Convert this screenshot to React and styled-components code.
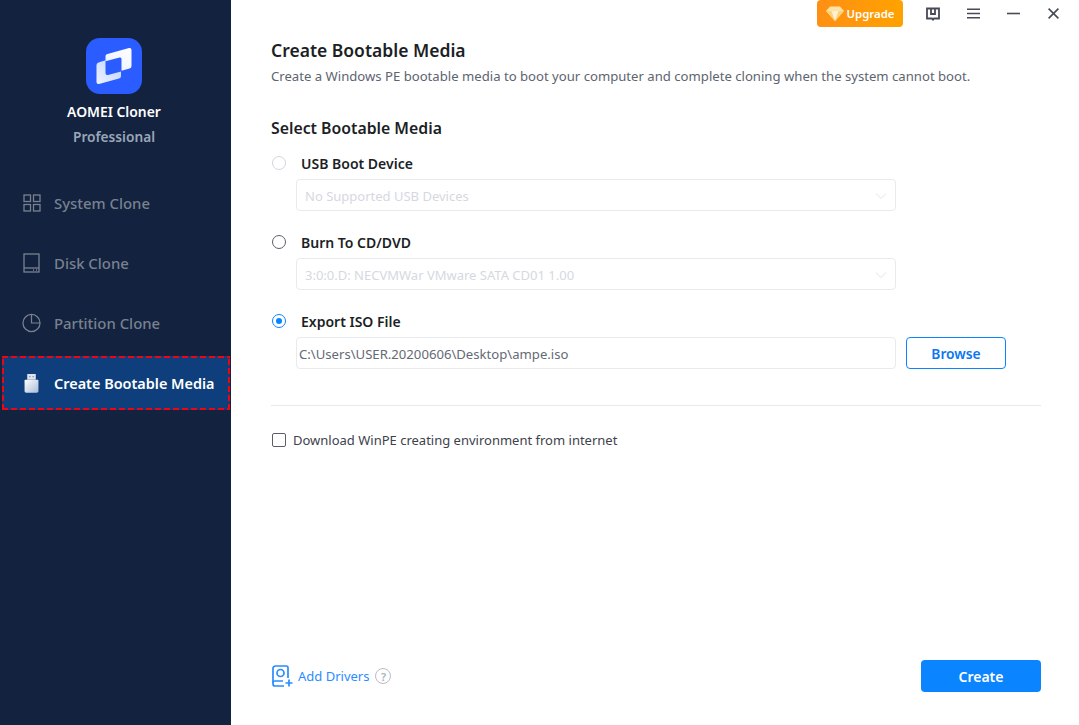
import React from "react";
import styled, { createGlobalStyle } from "styled-components";

const GlobalStyle = createGlobalStyle`
  html, body { margin: 0; padding: 0; background: #fff; }
  body { font-family: "Noto Sans", "Open Sans", sans-serif; }
`;

const Window = styled.div`
  display: flex;
  width: 1079px;
  height: 725px;
  overflow: hidden;
`;

const Sidebar = styled.aside`
  width: 231px;
  flex-shrink: 0;
  background: #13233f;
  display: flex;
  flex-direction: column;
  padding-top: 38px;
  box-sizing: border-box;
`;

const Brand = styled.div`
  display: flex;
  flex-direction: column;
  align-items: center;
  padding-right: 3px;
`;

const LogoTile = styled.div`
  width: 56px;
  height: 56px;
  border-radius: 14px;
  background: #2b5cff;
  display: flex;
`;

const AppName = styled.div`
  margin-top: 8px;
  color: #fff;
  font-size: 13.9px;
  font-weight: 600;
  line-height: 20px;
`;

const Edition = styled.div`
  margin-top: 5px;
  color: #9aa6b8;
  font-size: 13.7px;
  font-weight: 600;
  line-height: 20px;
`;

const Nav = styled.nav`
  margin-top: 26px;
  display: flex;
  flex-direction: column;
`;

const NavItem = styled.div`
  height: 60px;
  box-sizing: border-box;
  display: flex;
  align-items: center;
  gap: 13px;
  padding-left: 22px;
  font-size: 14.9px;
  font-weight: 500;
  color: #79818f;
`;

/* the red dashes are marked on the selected row itself, so the fill stays inside them */
const ActiveNavItem = styled(NavItem)`
  height: 54px;
  margin: 3px 1px 3px 2px;
  padding-left: 20px;
  font-size: 14.45px;
  font-weight: 600;
  color: #fff;
  background:
    repeating-linear-gradient(90deg, #ee0412 0 6px, transparent 6px 9px) top / 100% 2px no-repeat,
    repeating-linear-gradient(90deg, #ee0412 0 6px, transparent 6px 9px) bottom / 100% 2px no-repeat,
    repeating-linear-gradient(0deg, #ee0412 0 6px, transparent 6px 9px) left / 2px 100% no-repeat,
    repeating-linear-gradient(0deg, #ee0412 0 6px, transparent 6px 9px) right / 2px 100% no-repeat,
    #0e3f7c;
`;

const NavIcon = styled.span`
  width: 19px;
  height: 20px;
  display: flex;
  align-items: center;
  justify-content: center;
`;

const Main = styled.main`
  flex: 1;
  display: flex;
  flex-direction: column;
  padding: 0 38px 33px 40px;
  box-sizing: border-box;
  min-width: 0;
`;

const TopBar = styled.div`
  height: 27px;
  margin-right: -38px;
  padding-right: 6px;
  display: flex;
  align-items: flex-start;
  justify-content: flex-end;
`;

const UpgradeButton = styled.div`
  width: 86px;
  height: 27px;
  border-radius: 4px;
  background: linear-gradient(90deg, #ff8f14, #ffa200);
  color: #fff;
  font-size: 11.4px;
  font-weight: 600;
  display: flex;
  align-items: center;
  justify-content: center;
  gap: 3px;
  margin-right: 10px;
`;

const WinButton = styled.div`
  width: 40px;
  height: 27px;
  display: flex;
  align-items: center;
  justify-content: center;
`;

const Title = styled.h1`
  margin: 11px 0 0;
  font-size: 17.5px;
  line-height: 24px;
  font-weight: 600;
  color: #1c1f26;
`;

const Subtitle = styled.p`
  margin: 5px 0 0;
  font-size: 13.13px;
  line-height: 18px;
  color: #5d6470;
`;

const SectionTitle = styled.h2`
  margin: 32px 0 0;
  font-size: 15.8px;
  line-height: 22px;
  font-weight: 600;
  color: #1c1f26;
`;

const OptionRow = styled.div`
  display: flex;
  align-items: center;
  height: 20px;
  margin-top: ${(p) => p.$top}px;
  padding-left: 1px;
`;

const Radio = styled.span`
  width: 14px;
  height: 14px;
  border-radius: 50%;
  box-sizing: border-box;
  border: 1.5px solid ${(p) => p.$color};
  margin-right: 15px;
  display: flex;
  align-items: center;
  justify-content: center;
  &::after {
    content: "";
    display: ${(p) => (p.$checked ? "block" : "none")};
    width: 6px;
    height: 6px;
    border-radius: 50%;
    background: #0a84ff;
  }
`;

const OptionLabel = styled.span`
  font-size: 14px;
  font-weight: 600;
  color: #1c1f26;
`;

const FieldRow = styled.div`
  display: flex;
  gap: 10px;
  margin: 6px 0 0 25px;
`;

const Field = styled.div`
  width: 600px;
  height: 32px;
  box-sizing: border-box;
  border: 1px solid #e8eaed;
  border-radius: 4px;
  display: flex;
  align-items: center;
  justify-content: space-between;
  padding: 2px 8px 0 ${(p) => (p.$filled ? 2 : 8)}px;
  font-size: ${(p) => (p.$filled ? 13.13 : 13)}px;
  color: ${(p) => (p.$filled ? "#646a74" : "#d5d9df")};
`;

const BrowseButton = styled.div`
  width: 100px;
  height: 32px;
  box-sizing: border-box;
  border: 1px solid #0a84ff;
  border-radius: 4px;
  color: #0a78f0;
  font-size: 13.8px;
  font-weight: 600;
  display: flex;
  align-items: center;
  justify-content: center;
`;

const Divider = styled.hr`
  margin: 36px 0 0;
  border: none;
  border-top: 1px solid #e8e9ec;
`;

const CheckRow = styled.div`
  display: flex;
  align-items: center;
  margin-top: 24px;
  padding-left: 1px;
  height: 20px;
  font-size: 13px;
  color: #3d424c;
`;

const CheckBox = styled.span`
  width: 14px;
  height: 14px;
  box-sizing: border-box;
  border: 1.5px solid #5a5f69;
  border-radius: 2px;
  margin-right: 7px;
`;

const Footer = styled.div`
  margin-top: auto;
  display: flex;
  align-items: center;
  justify-content: space-between;
`;

const DriversLink = styled.div`
  display: flex;
  align-items: center;
  gap: 4px;
  color: #2b8cff;
  font-size: 13px;
  padding-left: 1px;
`;

const HelpMark = styled.span`
  width: 16px;
  height: 16px;
  box-sizing: border-box;
  margin-left: 2px;
  border: 1px solid #b8bdc8;
  border-radius: 50%;
  color: #a9afbb;
  font-size: 11px;
  font-weight: 600;
  display: flex;
  align-items: center;
  justify-content: center;
`;

const CreateButton = styled.div`
  width: 120px;
  height: 32px;
  padding-top: 1px;
  box-sizing: border-box;
  border-radius: 4px;
  background: #0a84ff;
  color: #fff;
  font-size: 14px;
  font-weight: 600;
  display: flex;
  align-items: center;
  justify-content: center;
`;

const Chevron = () => (
  <svg width="12" height="8" viewBox="0 0 12 8" fill="none">
    <path d="M1 1.5l5 5 5-5" stroke="#f0f1f3" strokeWidth="1.4" />
  </svg>
);

const Logo = () => (
  <svg width="56" height="56" viewBox="0 0 56 56">
    <defs>
      <linearGradient id="logoTop" x1="1" y1="0" x2="0" y2="1">
        <stop offset="0" stopColor="#ffffff" />
        <stop offset="1" stopColor="#e6eeff" />
      </linearGradient>
      <linearGradient id="logoBottom" x1="1" y1="0" x2="0" y2="1">
        <stop offset="0" stopColor="#bcd0ff" />
        <stop offset="1" stopColor="#eef3ff" />
      </linearGradient>
    </defs>
    <path
      fill="url(#logoTop)"
      d="M21.500 16 43 10Q45.500 9.500 45.500 12V28Q45.500 30 43.500 30.500L35.500 32.800V21Q35.500 19 33.500 19.500L19.500 23.300V18Q19.500 16.500 21.500 16Z"
    />
    <path
      fill="url(#logoBottom)"
      d="M19.500 22.300 12.500 24.500Q10.500 25 10.500 27V44Q10.500 46.500 13 46L33 40.500Q35 40 35 38V33.500L22 37Q19.500 37.600 19.500 35Z"
    />
  </svg>
);

const GridIcon = () => (
  <svg width="18" height="18" viewBox="0 0 18 18" fill="none" stroke="#79818f" strokeWidth="1.3">
    <rect x="1" y="1" width="6.5" height="6.5" />
    <rect x="10.5" y="1" width="6.5" height="6.5" />
    <rect x="1" y="10.5" width="6.5" height="6.5" />
    <rect x="10.5" y="10.5" width="6.5" height="6.5" />
  </svg>
);

const DiskIcon = () => (
  <svg width="17" height="20" viewBox="0 0 17 20" fill="none" stroke="#79818f" strokeWidth="1.3">
    <rect x="1" y="1" width="15" height="18" />
    <path d="M1 15h15" />
    <path d="M10 17h1M13 17h1" />
  </svg>
);

const PieIcon = () => (
  <svg width="20" height="20" viewBox="0 0 20 20" fill="none" stroke="#79818f" strokeWidth="1.3">
    <circle cx="10" cy="10" r="9" />
    <path d="M10 1v9h9" />
  </svg>
);

const UsbIcon = () => (
  <svg width="15" height="19" viewBox="0 0 15 20">
    <defs>
      <linearGradient id="usbFade" x1="0" y1="0" x2="1" y2="1">
        <stop offset="0" stopColor="#ffffff" />
        <stop offset="1" stopColor="#a9bcd8" />
      </linearGradient>
    </defs>
    <path d="M3 0h9v6H3z" fill="#dfe5ee" />
    <path d="M5 2h1.500v1.500H5zM8.500 2H10v1.500H8.500z" fill="#8a99b0" />
    <path d="M1 6h13c.5 0 .8.300.8.800V18c0 1-.7 1.800-1.800 1.800H2C.9 19.800.2 19 .2 18V6.800C.2 6.300.5 6 1 6Z" fill="url(#usbFade)" />
  </svg>
);

const Gem = () => (
  <svg width="18" height="15" viewBox="0 0 18 15">
    <path d="M4 .5h10L18 5 9 15 0 5z" fill="#ffe2a6" />
    <path d="M0 5h18L9 15z" fill="#ffd27a" />
    <path d="M5.500 5h7L9 15z" fill="#fff1d2" />
  </svg>
);

const BookIcon = () => (
  <svg width="14" height="14" viewBox="0 0 14 14" fill="none" stroke="#474b58" strokeWidth="1.8">
    <path d="M1 1.500h12v10H8L7 12.700 6 11.500H1z" />
    <path d="M5 1.500v5.500h4V1.500" />
  </svg>
);

const MenuIcon = () => (
  <svg width="13" height="11" viewBox="0 0 13 11" fill="none" stroke="#474b58" strokeWidth="1.600">
    <path d="M0 1.200h13M0 5.500h13M0 9.800h13" />
  </svg>
);

const MinIcon = () => (
  <svg width="13" height="3" viewBox="0 0 13 3" fill="none" stroke="#474b58" strokeWidth="1.600">
    <path d="M0 1.500h13" />
  </svg>
);

const CloseIcon = () => (
  <svg width="11" height="11" viewBox="0 0 11 11" fill="none" stroke="#474b58" strokeWidth="1.600">
    <path d="M.6.600l9.800 9.800M10.400.600.600 10.400" />
  </svg>
);

const DriverIcon = () => (
  <svg width="22" height="22" viewBox="0 0 22 22" fill="none" stroke="#2b8cff" strokeWidth="1.700">
    <path d="M16 13V2.500C16 1.700 15.300 1 14.500 1H3.500C2.200 1 1 2 1 3.500V19c0 1 .8 2 2 2h9" />
    <circle cx="8.500" cy="8" r="3.500" />
    <path d="M1 17.500c0-1 .8-1.500 2-1.500h8" />
    <path d="M17 14.500v7M13.500 18h7" />
  </svg>
);

const App = () => (
  <Window>
    <GlobalStyle />
    <Sidebar>
      <Brand>
        <LogoTile>
          <Logo />
        </LogoTile>
        <AppName>AOMEI Cloner</AppName>
        <Edition>Professional</Edition>
      </Brand>
      <Nav>
        <NavItem>
          <NavIcon><GridIcon /></NavIcon>
          System Clone
        </NavItem>
        <NavItem>
          <NavIcon><DiskIcon /></NavIcon>
          Disk Clone
        </NavItem>
        <NavItem>
          <NavIcon><PieIcon /></NavIcon>
          Partition Clone
        </NavItem>
        <ActiveNavItem>
          <NavIcon><UsbIcon /></NavIcon>
          Create Bootable Media
        </ActiveNavItem>
      </Nav>
    </Sidebar>
    <Main>
      <TopBar>
        <UpgradeButton><Gem />Upgrade</UpgradeButton>
        <WinButton><BookIcon /></WinButton>
        <WinButton><MenuIcon /></WinButton>
        <WinButton><MinIcon /></WinButton>
        <WinButton><CloseIcon /></WinButton>
      </TopBar>
      <Title>Create Bootable Media</Title>
      <Subtitle>Create a Windows PE bootable media to boot your computer and complete cloning when the system cannot boot.</Subtitle>
      <SectionTitle>Select Bootable Media</SectionTitle>

      <OptionRow $top={14}>
        <Radio $color="#d3d6dc" />
        <OptionLabel>USB Boot Device</OptionLabel>
      </OptionRow>
      <FieldRow>
        <Field>No Supported USB Devices<Chevron /></Field>
      </FieldRow>

      <OptionRow $top={21}>
        <Radio $color="#5a5f69" />
        <OptionLabel>Burn To CD/DVD</OptionLabel>
      </OptionRow>
      <FieldRow>
        <Field>3:0:0.D: NECVMWar VMware SATA CD01 1.00<Chevron /></Field>
      </FieldRow>

      <OptionRow $top={21}>
        <Radio $color="#0a84ff" $checked />
        <OptionLabel>Export ISO File</OptionLabel>
      </OptionRow>
      <FieldRow>
        <Field $filled>C:\Users\USER.20200606\Desktop\ampe.iso</Field>
        <BrowseButton>Browse</BrowseButton>
      </FieldRow>

      <Divider />
      <CheckRow>
        <CheckBox />
        Download WinPE creating environment from internet
      </CheckRow>

      <Footer>
        <DriversLink>
          <DriverIcon />
          Add Drivers
          <HelpMark>?</HelpMark>
        </DriversLink>
        <CreateButton>Create</CreateButton>
      </Footer>
    </Main>
  </Window>
);

export default App;
